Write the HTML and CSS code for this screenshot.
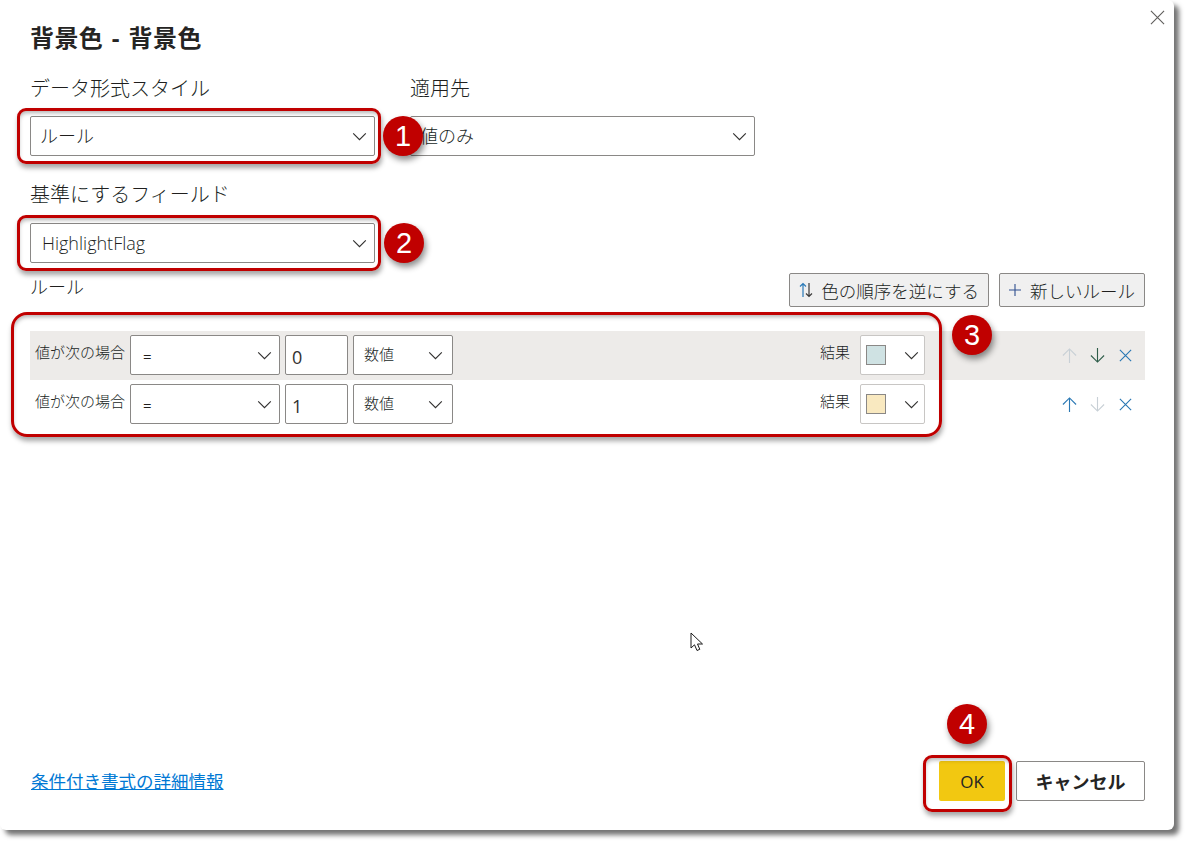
FILE: index.html
```html
<!DOCTYPE html>
<html lang="ja">
<head>
<meta charset="utf-8">
<title>背景色 - 背景色</title>
<link rel="stylesheet" href="styles.css">
</head>
<body>
<svg class="defs" width="0" height="0" aria-hidden="true">
  <symbol id="chev" viewBox="0 0 16 10"><path d="M1 1.5 8 8.5 15 1.5" fill="none" stroke="currentColor" stroke-width="1.300"/></symbol>
  <symbol id="up" viewBox="0 0 16 16"><path d="M8 16V1M1 8 8 1l7 7" fill="none" stroke="currentColor" stroke-width="1.200"/></symbol>
  <symbol id="down" viewBox="0 0 16 16"><path d="M8 0V15M1 8 8 15l7-7" fill="none" stroke="currentColor" stroke-width="1.200"/></symbol>
  <symbol id="cross" viewBox="0 0 16 16"><path d="M2 2 14 14M14 2 2 14" fill="none" stroke="currentColor" stroke-width="1.200"/></symbol>
</svg>
<main class="dialog">
  <svg class="close" viewBox="0 0 16 16" aria-label="閉じる"><path d="M1 1 15 15M15 1 1 15" fill="none" stroke="currentColor" stroke-width="1.200"/></svg>
  <h1 class="title">背景色 - 背景色</h1>

  <div class="top-row">
    <div class="field">
      <div class="label">データ形式スタイル</div>
      <div class="select big"><span class="cjk">ルール</span><svg class="chev"><use href="#chev"/></svg></div>
    </div>
    <div class="field">
      <div class="label">適用先</div>
      <div class="select big"><span class="cjk">値のみ</span><svg class="chev"><use href="#chev"/></svg></div>
    </div>
  </div>

  <div class="field base-field">
    <div class="label">基準にするフィールド</div>
    <div class="select big latin"><span>HighlightFlag</span><svg class="chev"><use href="#chev"/></svg></div>
  </div>

  <div class="rules-head">
    <div class="rules-label">ルール</div>
    <div class="actions">
      <button class="tool-btn"><svg class="swap" viewBox="0 0 14 16"><path d="M4 15V1.500M1 4.500 4 1.500 7 4.500" fill="none" stroke="#2a7ab8" stroke-width="1.200"/><path d="M10 1V14.500M7 11.500 10 14.500 13 11.500" fill="none" stroke="#3b3a39" stroke-width="1.200"/></svg>色の順序を逆にする</button>
      <button class="tool-btn"><svg class="plus" viewBox="0 0 12 12"><path d="M6 0V12M0 6H12" fill="none" stroke="#2f4f8f" stroke-width="1.100"/></svg>新しいルール</button>
    </div>
  </div>

  <div class="rules">
    <div class="rule shaded">
      <div class="cond">値が次の場合</div>
      <div class="select op"><span>=</span><svg class="chev"><use href="#chev"/></svg></div>
      <div class="input">0</div>
      <div class="select kind"><span class="cjk">数値</span><svg class="chev"><use href="#chev"/></svg></div>
      <div class="result">結果</div>
      <div class="select color"><i class="swatch blue"></i><svg class="chev"><use href="#chev"/></svg></div>
      <div class="row-icons">
        <svg class="ri off"><use href="#up"/></svg>
        <svg class="ri dark"><use href="#down"/></svg>
        <svg class="ri act"><use href="#cross"/></svg>
      </div>
    </div>
    <div class="rule">
      <div class="cond">値が次の場合</div>
      <div class="select op"><span>=</span><svg class="chev"><use href="#chev"/></svg></div>
      <div class="input">1</div>
      <div class="select kind"><span class="cjk">数値</span><svg class="chev"><use href="#chev"/></svg></div>
      <div class="result">結果</div>
      <div class="select color"><i class="swatch yellow"></i><svg class="chev"><use href="#chev"/></svg></div>
      <div class="row-icons">
        <svg class="ri act"><use href="#up"/></svg>
        <svg class="ri off"><use href="#down"/></svg>
        <svg class="ri act"><use href="#cross"/></svg>
      </div>
    </div>
  </div>

  <footer class="footer">
    <a class="link" href="#">条件付き書式の詳細情報</a>
    <div class="footer-btns">
      <button class="ok">OK</button>
      <button class="cancel">キャンセル</button>
    </div>
  </footer>
</main>

<div class="ring r1"></div>
<div class="ring r2"></div>
<div class="ring r3"></div>
<div class="ring r4"></div>
<div class="badge b1">1</div>
<div class="badge b2">2</div>
<div class="badge b3">3</div>
<div class="badge b4">4</div>
<svg class="cursor" viewBox="0 0 13 20"><path d="M1 1V16L4.500 12.800 7 18.500 9.800 17.300 7.500 12H12.500Z" fill="#fff" stroke="#1a1a1a" stroke-width="1"/></svg>
</body>
</html>
```
FILE: styles.css
```css
* { box-sizing: border-box; }
html, body { margin: 0; padding: 0; background: #fff; }
body {
  position: relative;
  width: 1189px;
  height: 846px;
  overflow: hidden;
  font-family: "Open Sans", "Noto Sans CJK JP", sans-serif;
  color: #201f1e;
}
.defs { position: absolute; }

.dialog {
  position: relative;
  width: 1174px;
  height: 830px;
  padding: 22px 29px 29px 30px;
  display: flex;
  flex-direction: column;
  background: #fff;
  border-radius: 6px;
  box-shadow: 5px 5px 5px rgba(0, 0, 0, .55);
}
.close {
  position: absolute;
  left: 1150px;
  top: 10px;
  width: 15px;
  height: 15px;
  color: #605e5c;
}
.title {
  margin: 0;
  font-size: 24px;
  line-height: 32px;
  font-weight: 700;
  word-spacing: 2px;
  letter-spacing: .4px;
  color: #252423;
}
.top-row { display: flex; gap: 35px; margin-top: 21px; }
.field { width: 345px; }
.label {
  font-size: 20px;
  line-height: 28px;
  margin-bottom: 13px;
  font-weight: 300;
}
.base-field { margin-top: 25px; }
.base-field .label { margin-bottom: 14px; }

.select {
  display: flex;
  align-items: center;
  justify-content: space-between;
  height: 40px;
  background: #fff;
  border: 1px solid #8a8886;
  border-radius: 2px;
  font-weight: 300;
}
.cjk { padding-bottom: 3px; }
.big { font-size: 18px; padding: 0 7px 0 9px; }
.latin { padding-left: 11px; }
.chev { width: 15px; height: 9px; color: #323130; flex: none; display: block; }

.rules-head {
  display: flex;
  justify-content: space-between;
  margin-top: 10px;
  height: 34px;
}
.rules-label { font-size: 18px; line-height: 28px; font-weight: 300; }
.actions { display: flex; gap: 10px; }
.tool-btn {
  display: flex;
  align-items: center;
  height: 34px;
  padding: 0 9px;
  font: inherit;
  font-size: 17.500px;
  font-weight: 300;
  color: #201f1e;
  background: #f0f0f0;
  border: 1px solid #8a8886;
  border-radius: 2px;
  white-space: nowrap;
}
.swap { width: 14px; height: 16px; margin-right: 8px; }
.plus { width: 12px; height: 12px; margin-right: 9px; }

.rules { margin-top: 24px; }
.rule {
  display: flex;
  align-items: flex-start;
  height: 49px;
  padding-top: 4px;
  gap: 5px;
}
.shaded { background: #edebe9; }
.cond {
  width: 95px;
  padding-left: 5px;
  font-size: 15px;
  line-height: 34px;
  font-weight: 300;
  white-space: nowrap;
}
.op { width: 150px; padding: 0 7px 0 12px; font-size: 15px; font-weight: 400; }
.op span { padding-top: 2px; }
.input {
  width: 63px;
  height: 40px;
  padding: 0 6px;
  font-size: 18px;
  line-height: 42px;
  font-weight: 400;
  color: #323130;
  background: #fff;
  border: 1px solid #8a8886;
  border-radius: 2px;
}
.kind { width: 100px; padding: 0 9px 0 10px; font-size: 15px; }
.result {
  margin-left: auto;
  width: 35px;
  font-size: 15px;
  line-height: 34px;
  font-weight: 300;
}
.color {
  width: 65px;
  padding: 0 5px;
  border-color: #c8c6c4;
}
.swatch {
  width: 20px;
  height: 20px;
  border: 1px solid #8a8886;
  display: block;
}
.blue { background: #cfe2e3; }
.yellow { background: #f9e9c0; }
.row-icons {
  width: 215px;
  height: 40px;
  display: flex;
  align-items: center;
  justify-content: flex-end;
  gap: 13px;
  padding-right: 12px;
}
.ri { width: 15px; height: 15px; display: block; }
.off { color: #c8d0d6; }
.dark { color: #2f5d4a; }
.act { color: #2a78b4; }

.footer {
  margin-top: auto;
  display: flex;
  justify-content: space-between;
  align-items: center;
}
.link {
  font-size: 17.500px;
  color: #0078d4;
  font-weight: 400;
  padding-left: 1px;
  padding-bottom: 2px;
  text-decoration: underline;
}
.footer-btns { display: flex; gap: 11px; }
.ok, .cancel {
  height: 40px;
  border-radius: 2px;
  font-family: inherit;
  padding: 0;
}
.ok {
  width: 66px;
  font-size: 17px;
  background: #f2c811;
  border: 0;
  color: #252423;
}
.cancel {
  width: 129px;
  font-size: 18px;
  font-weight: 700;
  background: #fff;
  border: 1px solid #8a8886;
  color: #252423;
}

/* annotation overlays */
.ring {
  position: absolute;
  border: 3px solid #c00000;
  border-radius: 9px;
  box-shadow: 1px 4px 5px rgba(0, 0, 0, .35), inset 1px 4px 4px -2px rgba(0, 0, 0, .3);
}
.r1 { left: 17px; top: 108px; width: 364px; height: 56px; }
.r2 { left: 17px; top: 215px; width: 364px; height: 56px; }
.r3 { left: 11px; top: 312px; width: 931px; height: 125px; border-radius: 16px; }
.r4 { left: 923px; top: 755px; width: 89px; height: 57px; }
.badge {
  position: absolute;
  width: 40px;
  height: 40px;
  border-radius: 50%;
  background: #c00000;
  color: #fff;
  font-family: "Liberation Sans", Arial, sans-serif;
  font-size: 29px;
  line-height: 40px;
  text-align: center;
  box-shadow: 2px 4px 6px rgba(0, 0, 0, .45);
}
.b1 { left: 383px; top: 116px; }
.b2 { left: 384px; top: 223px; }
.b3 { left: 952px; top: 315px; }
.b4 { left: 947px; top: 704px; }
.cursor { position: absolute; left: 690px; top: 632px; width: 13px; height: 20px; }
```
